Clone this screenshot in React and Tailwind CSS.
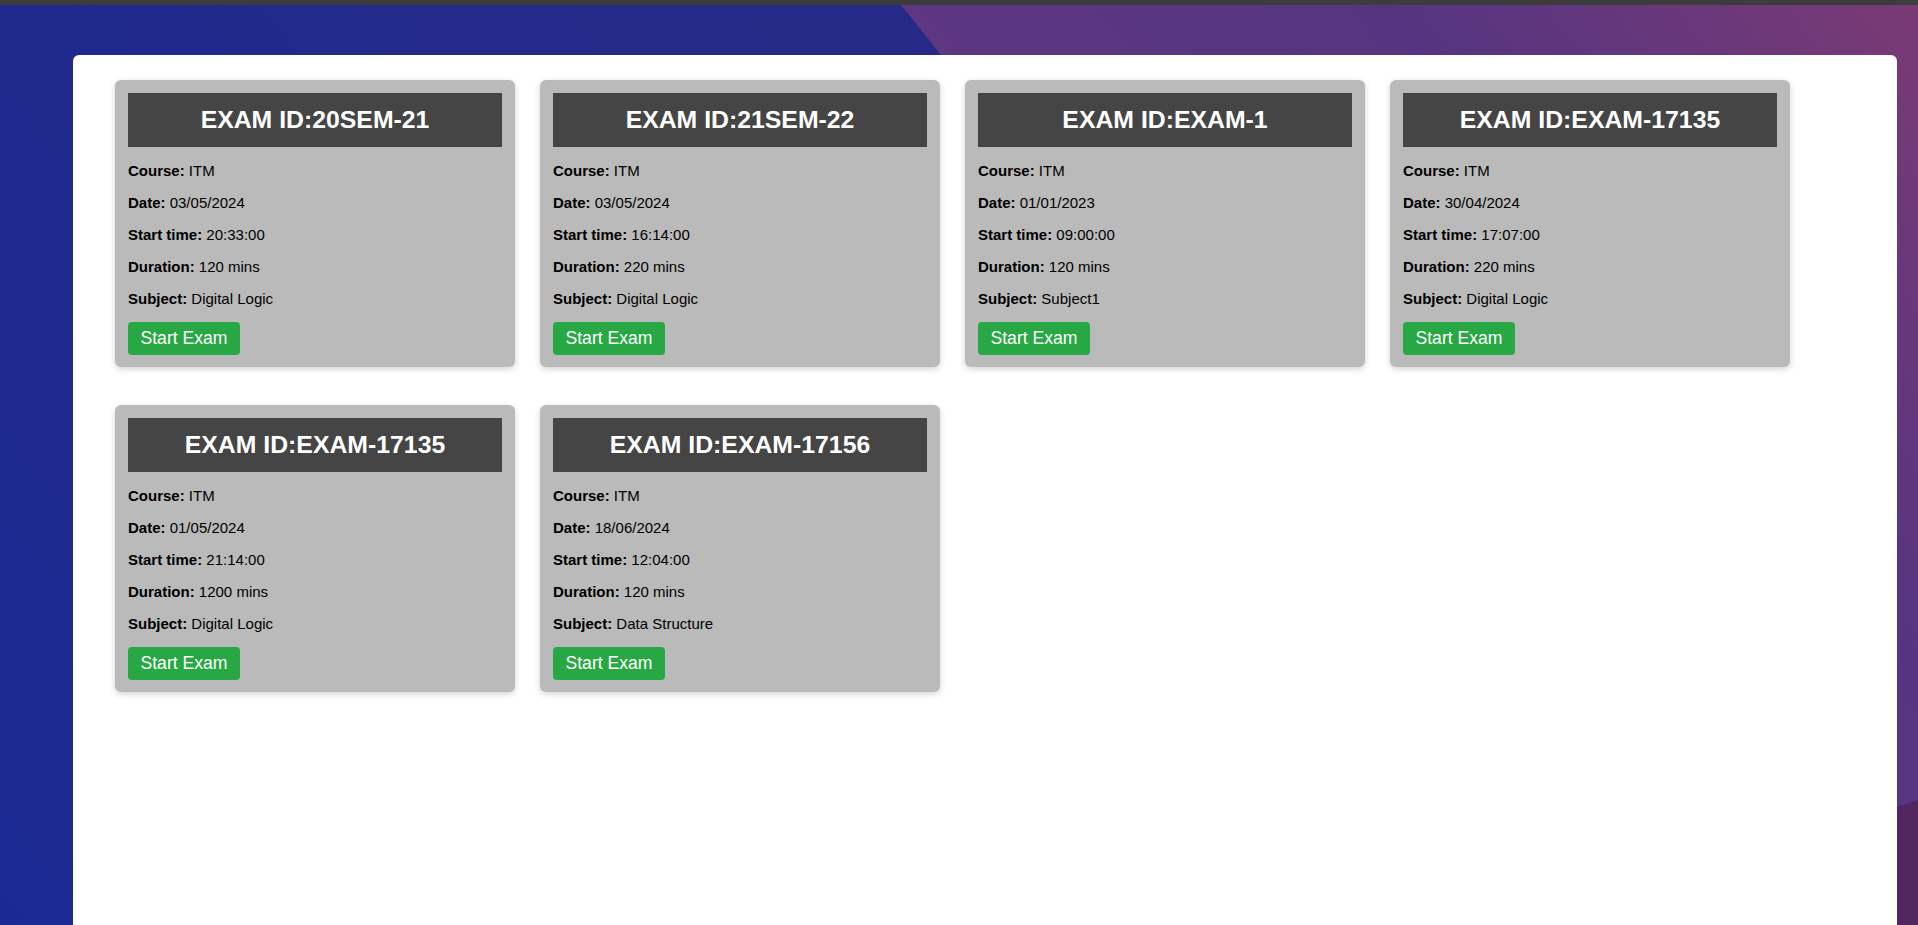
const exams = [
  { id: "20SEM-21", course: "ITM", date: "03/05/2024", start: "20:33:00", duration: "120 mins", subject: "Digital Logic" },
  { id: "21SEM-22", course: "ITM", date: "03/05/2024", start: "16:14:00", duration: "220 mins", subject: "Digital Logic" },
  { id: "EXAM-1", course: "ITM", date: "01/01/2023", start: "09:00:00", duration: "120 mins", subject: "Subject1" },
  { id: "EXAM-17135", course: "ITM", date: "30/04/2024", start: "17:07:00", duration: "220 mins", subject: "Digital Logic" },
  { id: "EXAM-17135", course: "ITM", date: "01/05/2024", start: "21:14:00", duration: "1200 mins", subject: "Digital Logic" },
  { id: "EXAM-17156", course: "ITM", date: "18/06/2024", start: "12:04:00", duration: "120 mins", subject: "Data Structure" },
];

function ExamCard({ exam }) {
  const rows = [
    ["Course", exam.course],
    ["Date", exam.date],
    ["Start time", exam.start],
    ["Duration", exam.duration],
    ["Subject", exam.subject],
  ];

  return (
    <div className="w-[400px] bg-[#bababa] rounded-[6px] px-[13px] pt-[13px] pb-[12px] shadow-[0_2px_6px_rgba(0,0,0,0.18)]">
      <h2 className="h-[54px] flex items-center justify-center bg-[#454545] text-white text-[24.8px] font-bold">
        EXAM ID:{exam.id}
      </h2>
      <div className="mt-[14.5px] flex flex-col gap-[15px] text-[15px] leading-[17px] text-black">
        {rows.map(([label, value]) => (
          <p key={label}>
            <span className="font-bold">{label}:</span> {value}
          </p>
        ))}
      </div>
      <button
        type="button"
        className="mt-[15.5px] h-[33px] px-[12.5px] rounded-[4px] bg-[#28a745] text-white text-[17.6px] leading-none"
      >
        Start Exam
      </button>
    </div>
  );
}

export default function App() {
  return (
    <div
      className="min-h-screen flex flex-col font-['Liberation_Sans',Arial,sans-serif] bg-[linear-gradient(161.6deg,transparent_92%,#52265f_92%),linear-gradient(51.3deg,#1b2a93_0%,#262a86_61.6%,#5d3781_61.6%,#553581_80%,#7a3a74_100%)]"
    >
      <div className="h-[5px] bg-[#3c3c3c]" />
      <div className="flex-1 flex pt-[50px] pl-[73px] pr-[21px]">
        <div className="flex-1 bg-white rounded-t-[6px] pt-[25px] pl-[42px] pr-[42px]">
          <div className="flex flex-wrap gap-x-[25px] gap-y-[38px]">
            {exams.map((exam, i) => (
              <ExamCard key={i} exam={exam} />
            ))}
          </div>
        </div>
      </div>
    </div>
  );
}
